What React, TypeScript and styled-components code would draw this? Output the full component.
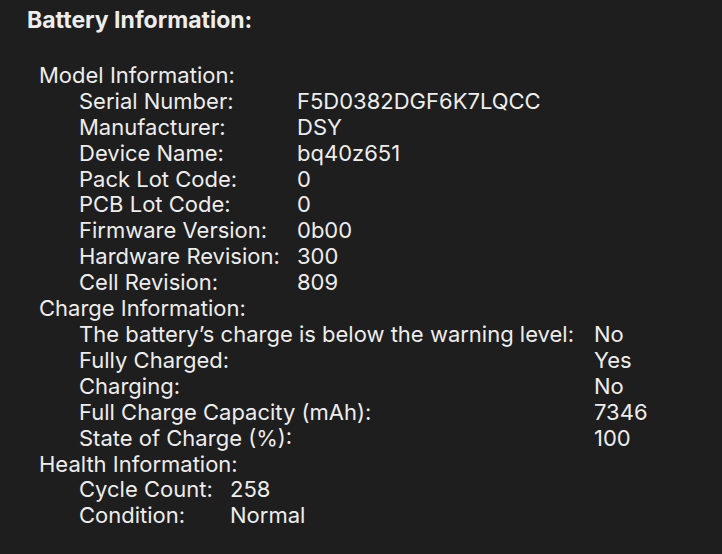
import styled, { createGlobalStyle } from "styled-components";

const GlobalStyle = createGlobalStyle`
  html, body {
    margin: 0;
    background: #1e1e1e;
  }
  body {
    font-family: Inter, "Noto Sans", sans-serif;
    color: #ededed;
  }
`;

type Field = [string, string];

const modelInfo: Field[] = [
  ["Serial Number:", "F5D0382DGF6K7LQCC"],
  ["Manufacturer:", "DSY"],
  ["Device Name:", "bq40z651"],
  ["Pack Lot Code:", "0"],
  ["PCB Lot Code:", "0"],
  ["Firmware Version:", "0b00"],
  ["Hardware Revision:", "300"],
  ["Cell Revision:", "809"],
];

const chargeInfo: Field[] = [
  ["The battery’s charge is below the warning level:", "No"],
  ["Fully Charged:", "Yes"],
  ["Charging:", "No"],
  ["Full Charge Capacity (mAh):", "7346"],
  ["State of Charge (%):", "100"],
];

const healthInfo: Field[] = [
  ["Cycle Count:", "258"],
  ["Condition:", "Normal"],
];

function Section({ title, fields, labelWidth }: {
  title: string;
  fields: Field[];
  labelWidth: number;
}) {
  return (
    <>
      <GroupTitle>{title}</GroupTitle>
      <Fields>
        {fields.map(([label, value]) => (
          <Row key={label}>
            <Label $width={labelWidth}>{label}</Label>
            <Value>{value}</Value>
          </Row>
        ))}
      </Fields>
    </>
  );
}

export default function App() {
  return (
    <>
      <GlobalStyle />
      <Panel>
        <Title>Battery Information:</Title>
        <Groups>
          <Section title="Model Information:" fields={modelInfo} labelWidth={218} />
          <Section title="Charge Information:" fields={chargeInfo} labelWidth={515} />
          <Section title="Health Information:" fields={healthInfo} labelWidth={151} />
        </Groups>
      </Panel>
    </>
  );
}

const Panel = styled.div`
  width: 722px;
  height: 554px;
  box-sizing: border-box;
  padding: 8px 0 0 27px;
  font-size: 22px;
  line-height: 25.9px;
`;

const Title = styled.div`
  font-weight: 700;
  font-size: 23px;
  margin-bottom: 29px;
`;

const Groups = styled.div`
  padding-left: 12px;
`;

const GroupTitle = styled.div``;

const Fields = styled.div`
  padding-left: 40px;
  display: flex;
  flex-direction: column;
`;

const Row = styled.div`
  display: flex;
  white-space: nowrap;
`;

const Label = styled.span<{ $width: number }>`
  flex: 0 0 ${p => p.$width}px;
`;

const Value = styled.span``;
